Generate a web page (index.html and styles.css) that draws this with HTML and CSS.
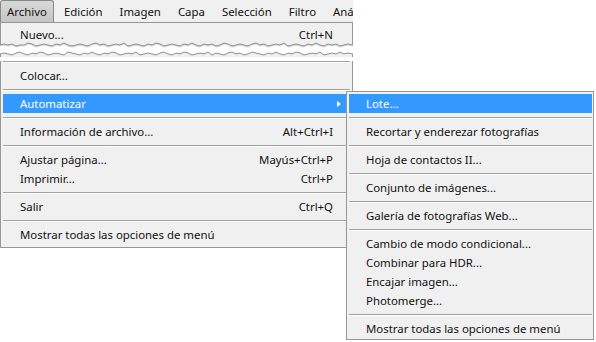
FILE: index.html
```html
<!DOCTYPE html>
<html lang="es">
  <head>
    <meta charset="UTF-8" />
    <meta name="viewport" content="width=device-width, initial-scale=1.0" />
    <title>Menú Archivo</title>
    <link rel="stylesheet" href="styles.css">
  </head>
  <body>
    <div class="screen">
      <div class="menu-col">
        <div class="menubar">
          <span class="top-item active">Archivo</span>
          <span class="top-item">Edición</span>
          <span class="top-item">Imagen</span>
          <span class="top-item">Capa</span>
          <span class="top-item">Selección</span>
          <span class="top-item">Filtro</span>
          <span class="top-item">Aná</span>
        </div>

        <div class="drop drop-top">
          <div class="item"><span>Nuevo...</span><span class="key">Ctrl+N</span></div>
        </div>

        <!-- torn edge between the two pieces of the menu -->
        <svg class="tear" width="353" height="15" viewBox="0 0 353 15">
          <polygon fill="#f0f0f0" points="0,0 0,3 4,2 8,3 12,2 16,4 20,3 24,3 28,1 32,2 36,4 40,3 44,2 48,3 52,4 56,2 60,3 64,1 68,3 72,4 76,3 80,2 84,3 88,4 92,2 96,1 100,3 104,2 108,4 112,3 116,2 120,3 124,1 128,4 132,3 136,2 140,3 144,4 148,2 152,3 156,1 160,2 164,4 168,3 172,2 176,3 180,4 184,2 188,3 192,1 196,3 200,4 204,2 208,3 212,2 216,4 220,3 224,1 228,2 232,4 236,3 240,2 244,3 248,4 252,2 256,1 260,3 264,2 268,4 272,3 276,2 280,3 284,1 288,4 292,3 296,2 300,3 304,4 308,2 312,3 316,1 320,3 324,4 328,2 332,3 336,2 340,4 344,3 348,2 353,3 353,0"/>
          <polyline fill="none" stroke="#d2d2d2" points="0,4 4,3 8,4 12,3 16,5 20,4 24,4 28,2 32,3 36,5 40,4 44,3 48,4 52,5 56,3 60,4 64,2 68,4 72,5 76,4 80,3 84,4 88,5 92,3 96,2 100,4 104,3 108,5 112,4 116,3 120,4 124,2 128,5 132,4 136,3 140,4 144,5 148,3 152,4 156,2 160,3 164,5 168,4 172,3 176,4 180,5 184,3 188,4 192,2 196,4 200,5 204,3 208,4 212,3 216,5 220,4 224,2 228,3 232,5 236,4 240,3 244,4 248,5 252,3 256,2 260,4 264,3 268,5 272,4 276,3 280,4 284,2 288,5 292,4 296,3 300,4 304,5 308,3 312,4 316,2 320,4 324,5 328,3 332,4 336,3 340,5 344,4 348,3 353,4"/>
          <polyline fill="none" stroke="#8c8c8c" points="0,3 4,2 8,3 12,2 16,4 20,3 24,3 28,1 32,2 36,4 40,3 44,2 48,3 52,4 56,2 60,3 64,1 68,3 72,4 76,3 80,2 84,3 88,4 92,2 96,1 100,3 104,2 108,4 112,3 116,2 120,3 124,1 128,4 132,3 136,2 140,3 144,4 148,2 152,3 156,1 160,2 164,4 168,3 172,2 176,3 180,4 184,2 188,3 192,1 196,3 200,4 204,2 208,3 212,2 216,4 220,3 224,1 228,2 232,4 236,3 240,2 244,3 248,4 252,2 256,1 260,3 264,2 268,4 272,3 276,2 280,3 284,1 288,4 292,3 296,2 300,3 304,4 308,2 312,3 316,1 320,3 324,4 328,2 332,3 336,2 340,4 344,3 348,2 353,3"/>
          <polygon fill="#f0f0f0" points="0,12 4,11 8,12 12,13 16,11 20,10 24,12 28,13 32,11 36,12 40,10 44,11 48,13 52,12 56,11 60,12 64,13 68,10 72,11 76,12 80,13 84,11 88,12 92,10 96,12 100,13 104,11 108,12 112,10 116,11 120,13 124,12 128,11 132,12 136,10 140,13 144,12 148,11 152,12 156,13 160,11 164,10 168,12 172,13 176,11 180,12 184,10 188,11 192,13 196,12 200,11 204,12 208,10 212,13 216,11 220,12 224,13 228,11 232,10 236,12 240,11 244,13 248,12 252,10 256,11 260,12 264,13 268,11 272,12 276,10 280,12 284,13 288,11 292,12 296,10 300,11 304,13 308,12 312,11 316,12 320,10 324,13 328,12 332,11 336,12 340,10 344,12 348,11 353,12 353,15 0,15"/>
          <polyline fill="none" stroke="#8c8c8c" points="0,12 4,11 8,12 12,13 16,11 20,10 24,12 28,13 32,11 36,12 40,10 44,11 48,13 52,12 56,11 60,12 64,13 68,10 72,11 76,12 80,13 84,11 88,12 92,10 96,12 100,13 104,11 108,12 112,10 116,11 120,13 124,12 128,11 132,12 136,10 140,13 144,12 148,11 152,12 156,13 160,11 164,10 168,12 172,13 176,11 180,12 184,10 188,11 192,13 196,12 200,11 204,12 208,10 212,13 216,11 220,12 224,13 228,11 232,10 236,12 240,11 244,13 248,12 252,10 256,11 260,12 264,13 268,11 272,12 276,10 280,12 284,13 288,11 292,12 296,10 300,11 304,13 308,12 312,11 316,12 320,10 324,13 328,12 332,11 336,12 340,10 344,12 348,11 353,12"/>
          <line x1="0.5" y1="0" x2="0.5" y2="3" stroke="#979797"/>
          <line x1="352.5" y1="0" x2="352.5" y2="3" stroke="#979797"/>
          <line x1="0.5" y1="12" x2="0.5" y2="15" stroke="#979797"/>
          <line x1="352.5" y1="12" x2="352.5" y2="15" stroke="#979797"/>
        </svg>

        <div class="drop drop-bottom">
          <div class="sep"></div>
          <div class="item"><span>Colocar...</span></div>
          <div class="sep"></div>
          <div class="item hot"><span>Automatizar</span><span class="arrow"></span></div>
          <div class="sep"></div>
          <div class="item"><span>Información de archivo...</span><span class="key">Alt+Ctrl+I</span></div>
          <div class="sep"></div>
          <div class="item"><span>Ajustar página...</span><span class="key">Mayús+Ctrl+P</span></div>
          <div class="item"><span>Imprimir...</span><span class="key">Ctrl+P</span></div>
          <div class="sep"></div>
          <div class="item"><span>Salir</span><span class="key">Ctrl+Q</span></div>
          <div class="sep"></div>
          <div class="item"><span>Mostrar todas las opciones de menú</span></div>
        </div>
      </div>

      <div class="submenu">
        <div class="item hot"><span>Lote...</span></div>
        <div class="sep"></div>
        <div class="item"><span>Recortar y enderezar fotografías</span></div>
        <div class="sep"></div>
        <div class="item"><span>Hoja de contactos II...</span></div>
        <div class="sep"></div>
        <div class="item"><span>Conjunto de imágenes...</span></div>
        <div class="sep"></div>
        <div class="item"><span>Galería de fotografías Web...</span></div>
        <div class="sep"></div>
        <div class="item"><span>Cambio de modo condicional...</span></div>
        <div class="item"><span>Combinar para HDR...</span></div>
        <div class="item"><span>Encajar imagen...</span></div>
        <div class="item"><span>Photomerge...</span></div>
        <div class="sep"></div>
        <div class="item"><span>Mostrar todas las opciones de menú</span></div>
      </div>
    </div>
  </body>
</html>
```

FILE: styles.css
```css
body {
  margin: 0;
  background-color: #fff;
}
.screen {
  position: relative;
  width: 596px;
  height: 342px;
  overflow: hidden;
  font-family: "Noto Sans", "Open Sans", sans-serif;
  font-size: 11.4px;
  color: #111;
}
.menu-col {
  width: 353px;
}
.menubar {
  display: flex;
  gap: 3px;
  height: 22px;
  overflow: hidden;
  white-space: nowrap;
  background-color: #f0f0f0;
}
.top-item {
  flex-shrink: 0;
  height: 21px;
  line-height: 21px;
  padding: 0 6px;
  border: 1px solid transparent;
  border-bottom: 0;
}
.top-item.active {
  background: linear-gradient(#d9d9d9, #c4c4c4);
  border-color: #888;
  border-radius: 3px 3px 0 0;
}
.drop {
  background-color: #f0f0f0;
  border-left: 1px solid #979797;
  border-right: 1px solid #979797;
  padding: 0 2px;
}
.drop-top {
  border-top: 1px solid #979797;
  padding-top: 2px;
}
.drop-bottom {
  border-bottom: 1px solid #979797;
  padding-bottom: 3px;
}
.tear {
  display: block;
  position: relative;
  margin-top: -2px;
}
.item {
  display: flex;
  align-items: center;
  height: 19px;
  padding: 0 17px;
  white-space: nowrap;
}
.item .key {
  margin-left: auto;
}
.item.hot {
  background-color: #3399ff;
  color: #fff;
}
.arrow {
  margin-left: auto;
  margin-right: -8px;
  width: 0;
  height: 0;
  border-left: 4px solid #fff;
  border-top: 3.5px solid transparent;
  border-bottom: 3.5px solid transparent;
}
.sep {
  margin: 4px 0 3px;
  border-top: 1px solid #a0a0a0;
  border-bottom: 1px solid #fff;
}
.submenu {
  position: absolute;
  left: 346px;
  top: 91px;
  width: 248px;
  box-sizing: border-box;
  padding: 2px 1px 1px 2px;
  background-color: #f0f0f0;
  border: 1px solid #979797;
}
```
